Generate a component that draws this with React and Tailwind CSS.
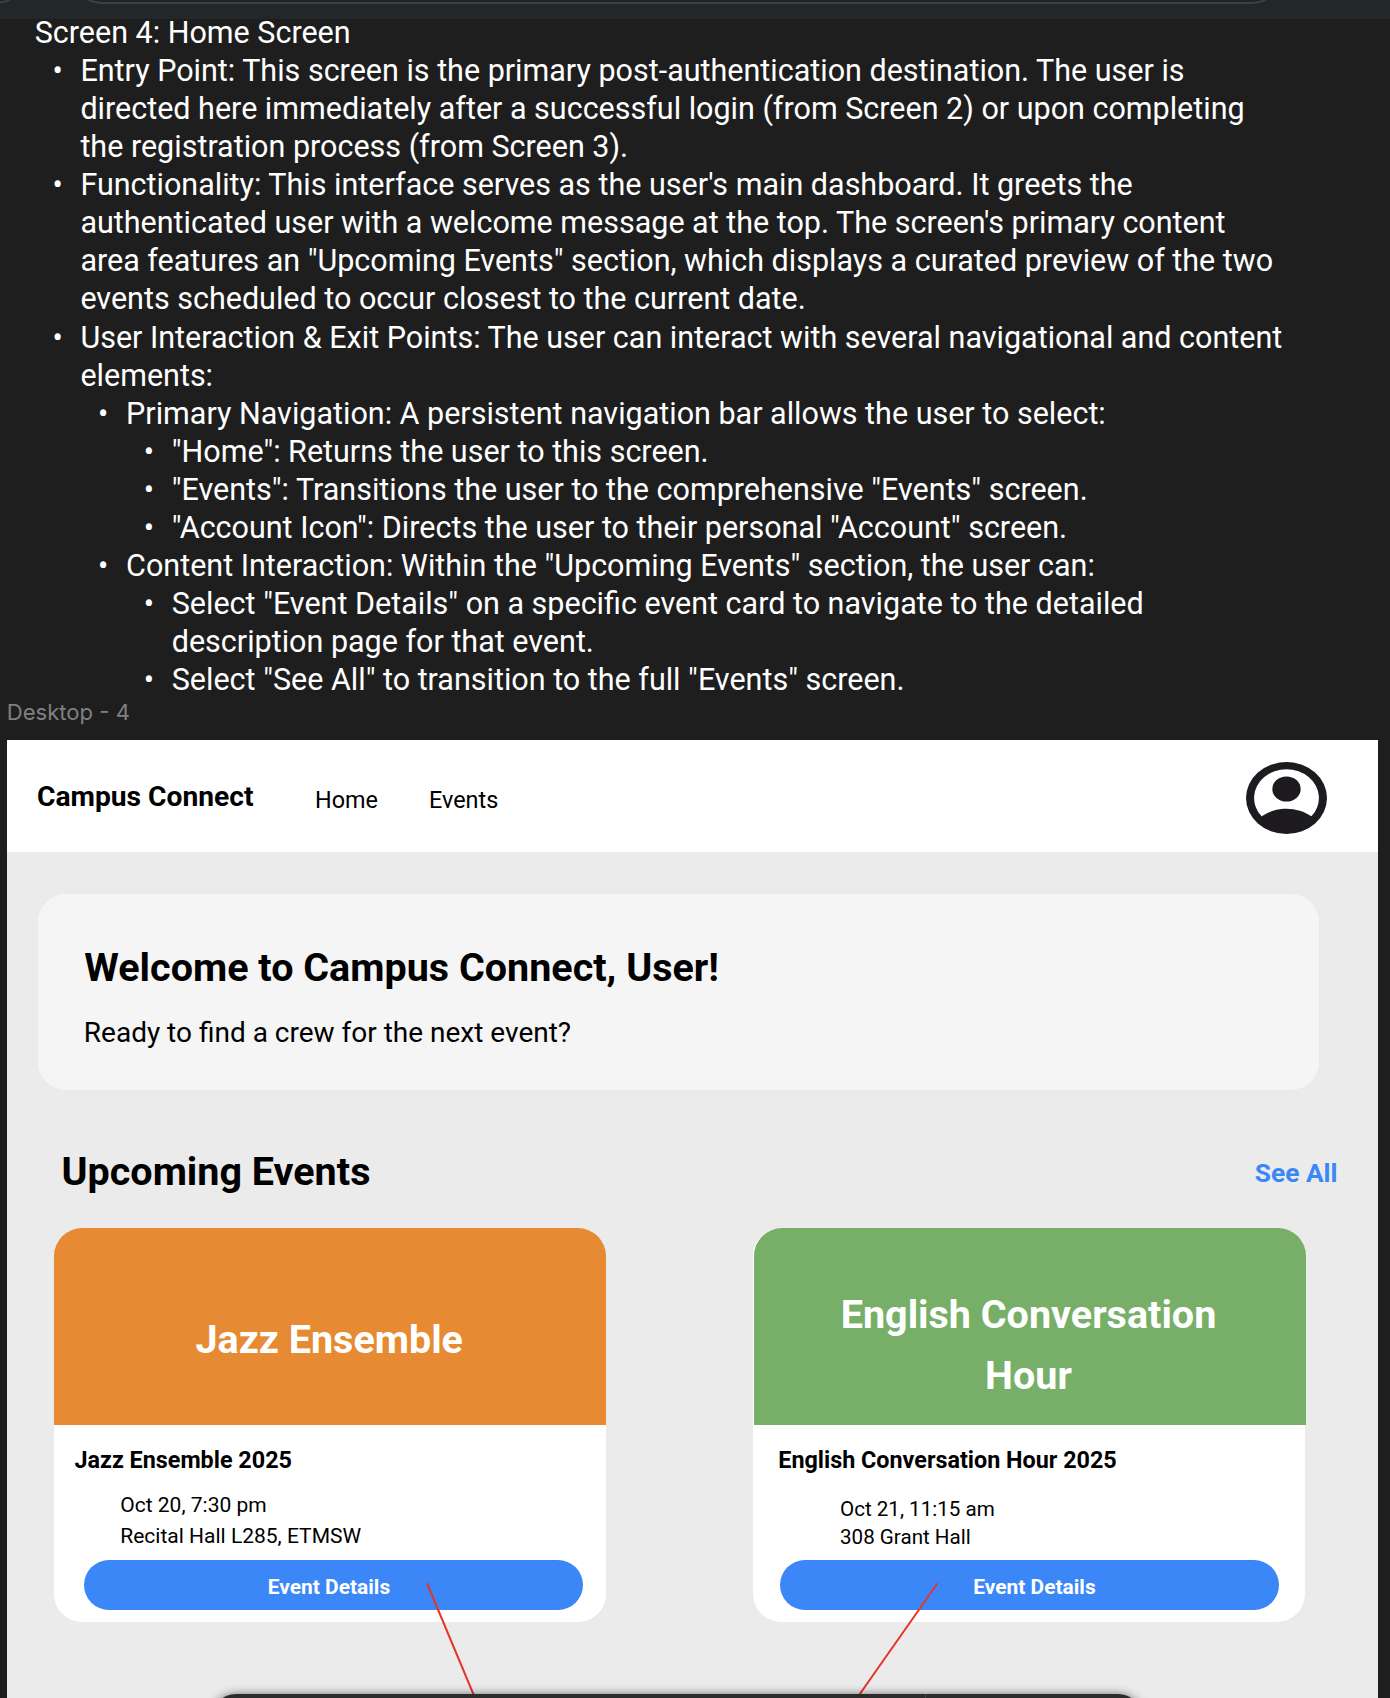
const navigation = [
  '"Home": Returns the user to this screen.',
  '"Events": Transitions the user to the comprehensive "Events" screen.',
  '"Account Icon": Directs the user to their personal "Account" screen.',
];

const EVENTS = [
  {
    banner: ["Jazz Ensemble"],
    title: "Jazz Ensemble 2025",
    when: "Oct 20, 7:30 pm",
    where: "Recital Hall L285, ETMSW",
    card: "w-[552px]",
    bannerClass: "bg-[#e68a33] pt-[81px] pr-[1.5px]",
    titleClass: "ml-[20.5px]",
    metaClass: "ml-[66.3px] mt-[16px] text-[21px] leading-[30.5px]",
    buttonClass: "ml-[30px] pr-[9px]",
  },
  {
    banner: ["English Conversation", "Hour"],
    title: "English Conversation Hour 2025",
    when: "Oct 21, 11:15 am",
    where: "308 Grant Hall",
    card: "w-[552px]",
    bannerClass: "ml-px w-[552px] bg-[#78af68] pt-[56px] pr-[3px]",
    titleClass: "ml-[25.3px]",
    metaClass: "ml-[87px] mt-[21px] text-[20.6px] leading-[28px]",
    buttonClass: "ml-[27px] pl-[10px]",
  },
];

function Item({ lines, children }) {
  return (
    <li>
      <div className="flex">
        <span className="flex w-[45.7px] shrink-0 justify-center pl-[4px] pr-[4px]">•</span>
        <div className="whitespace-nowrap">
          {lines.map((line) => (
            <div key={line}>{line}</div>
          ))}
        </div>
      </div>
      {children && <ul className="pl-[45.7px]">{children}</ul>}
    </li>
  );
}

function BrowserEdge() {
  return (
    <div className="relative h-[19px] overflow-hidden bg-[#22272a]">
      <div className="absolute -top-[96px] -left-[100px] h-[100px] w-[134px] rounded-[40px] border-2 border-[#3c4143] bg-[#1f2326]" />
      <div className="absolute -top-[96px] left-[64px] h-[100px] w-[1226px] rounded-[40px] border-2 border-[#3c4143] bg-[#1f2326]" />
    </div>
  );
}

function Notes() {
  return (
    <section className="flow-root h-[721px] text-white">
      <div className="-mt-[5px] h-[686px] pl-[34.7px] text-[30.5px] leading-[38.06px]">
        <div className="relative">Screen 4: Home Screen</div>
        <ul>
          <Item
            lines={[
              "Entry Point: This screen is the primary post-authentication destination. The user is",
              "directed here immediately after a successful login (from Screen 2) or upon completing",
              "the registration process (from Screen 3).",
            ]}
          />
          <Item
            lines={[
              "Functionality: This interface serves as the user's main dashboard. It greets the",
              "authenticated user with a welcome message at the top. The screen's primary content",
              'area features an "Upcoming Events" section, which displays a curated preview of the two',
              "events scheduled to occur closest to the current date.",
            ]}
          />
          <Item
            lines={[
              "User Interaction & Exit Points: The user can interact with several navigational and content",
              "elements:",
            ]}
          >
            <Item lines={["Primary Navigation: A persistent navigation bar allows the user to select:"]}>
              {navigation.map((text) => (
                <Item key={text} lines={[text]} />
              ))}
            </Item>
            <Item lines={['Content Interaction: Within the "Upcoming Events" section, the user can:']}>
              <Item
                lines={[
                  'Select "Event Details" on a specific event card to navigate to the detailed',
                  "description page for that event.",
                ]}
              />
              <Item lines={['Select "See All" to transition to the full "Events" screen.']} />
            </Item>
          </Item>
        </ul>
      </div>
      <div className="pl-[6.7px] font-['Inter',sans-serif] text-[22.1px] leading-6 text-[#808080]">Desktop - 4</div>
    </section>
  );
}

function AccountIcon() {
  return (
    <svg viewBox="2 2 20 20" preserveAspectRatio="none" className="h-[72px] w-[81px]" fill="#1d1b20">
      <path
        fillRule="evenodd"
        d="M12 2a10 10 0 1 0 0 20a10 10 0 1 0 0-20zM5.85 17.1C6.7 16.45 7.65 15.94 8.7 15.56S10.85 15 12 15s2.25.19 3.3.56s2 .89 2.85 1.54A8 8 0 1 0 5.85 17.1zM12 6a3.5 3.5 0 1 1 0 7a3.5 3.5 0 1 1 0-7z"
      />
    </svg>
  );
}

function NavBar() {
  return (
    <header className="flex h-[112px] items-start bg-white pl-[30px]">
      <div className="mt-[41px] w-[278px] whitespace-nowrap text-[28.2px] leading-[32px] font-bold">Campus Connect</div>
      <nav className="mt-[44px] flex text-[23.4px] leading-[32px]">
        <a className="w-[114px]">Home</a>
        <a>Events</a>
      </nav>
      <div className="mt-[22px] mr-[51px] ml-auto">
        <AccountIcon />
      </div>
    </header>
  );
}

function EventCard({ event }) {
  return (
    <article className={`h-[394px] rounded-[28px] bg-white ${event.card}`}>
      <div
        className={`h-[197px] rounded-t-[28px] text-center text-[39.5px] leading-[61px] font-bold text-white ${event.bannerClass}`}
      >
        {event.banner.map((line) => (
          <div key={line}>{line}</div>
        ))}
      </div>
      <div className="flex h-[197px] flex-col pt-[21px]">
        <h3 className={`text-[23.35px] leading-[28px] font-bold ${event.titleClass}`}>{event.title}</h3>
        <div className={event.metaClass}>
          <p>{event.when}</p>
          <p>{event.where}</p>
        </div>
        <button
          className={`mt-auto mb-[12px] h-[50px] w-[499px] rounded-full bg-[#3b87f7] pt-[4px] text-[20.95px] leading-[46px] font-bold text-white ${event.buttonClass}`}
        >
          Event Details
        </button>
      </div>
    </article>
  );
}

export default function App() {
  return (
    <div className="relative h-[1698px] w-[1390px] overflow-hidden bg-[#1e1e1e] font-['Roboto',sans-serif] text-black">
      <BrowserEdge />
      <Notes />
      <main className="ml-[7px] h-[958px] w-[1371px] bg-[#ebebeb]">
        <NavBar />
        <section className="mt-[42px] ml-[31px] h-[196px] w-[1281px] rounded-[28px] bg-[#f5f5f5] pt-[50px] pl-[46.3px]">
          <h1 className="text-[39.5px] leading-[48px] font-bold">Welcome to Campus Connect, User!</h1>
          <p className="mt-[24px] -ml-[0.5px] text-[28px] leading-[34px]">Ready to find a crew for the next event?</p>
        </section>
        <div className="mt-[58px] flex h-[48px] justify-between pr-[40.5px] pl-[54.5px]">
          <h2 className="text-[39.5px] leading-[48px] font-bold">Upcoming Events</h2>
          <a className="mt-[9px] text-[26.3px] leading-[32px] font-bold text-[#3b87f7]">See All</a>
        </div>
        <div className="mt-[32px] ml-[47px] flex gap-[147px]">
          {EVENTS.map((event) => (
            <EventCard key={event.title} event={event} />
          ))}
        </div>
      </main>
      <svg className="pointer-events-none absolute top-[1580px] left-[420px]" width="530" height="118" viewBox="420 1580 530 118">
        <g stroke="#e5352b" strokeWidth="2" strokeLinecap="round" fill="none">
          <path d="M427.3 1584L475 1698" />
          <path d="M937 1584L857 1698" />
        </g>
      </svg>
      <div className="absolute top-[1694px] left-[212px] flex h-[60px] w-[930px] rounded-[24px] bg-[#2c2c2c] shadow-[0_0_10px_rgba(0,0,0,0.5)]">
        <div className="ml-[713px] h-full w-px bg-[#444444]" />
      </div>
    </div>
  );
}
